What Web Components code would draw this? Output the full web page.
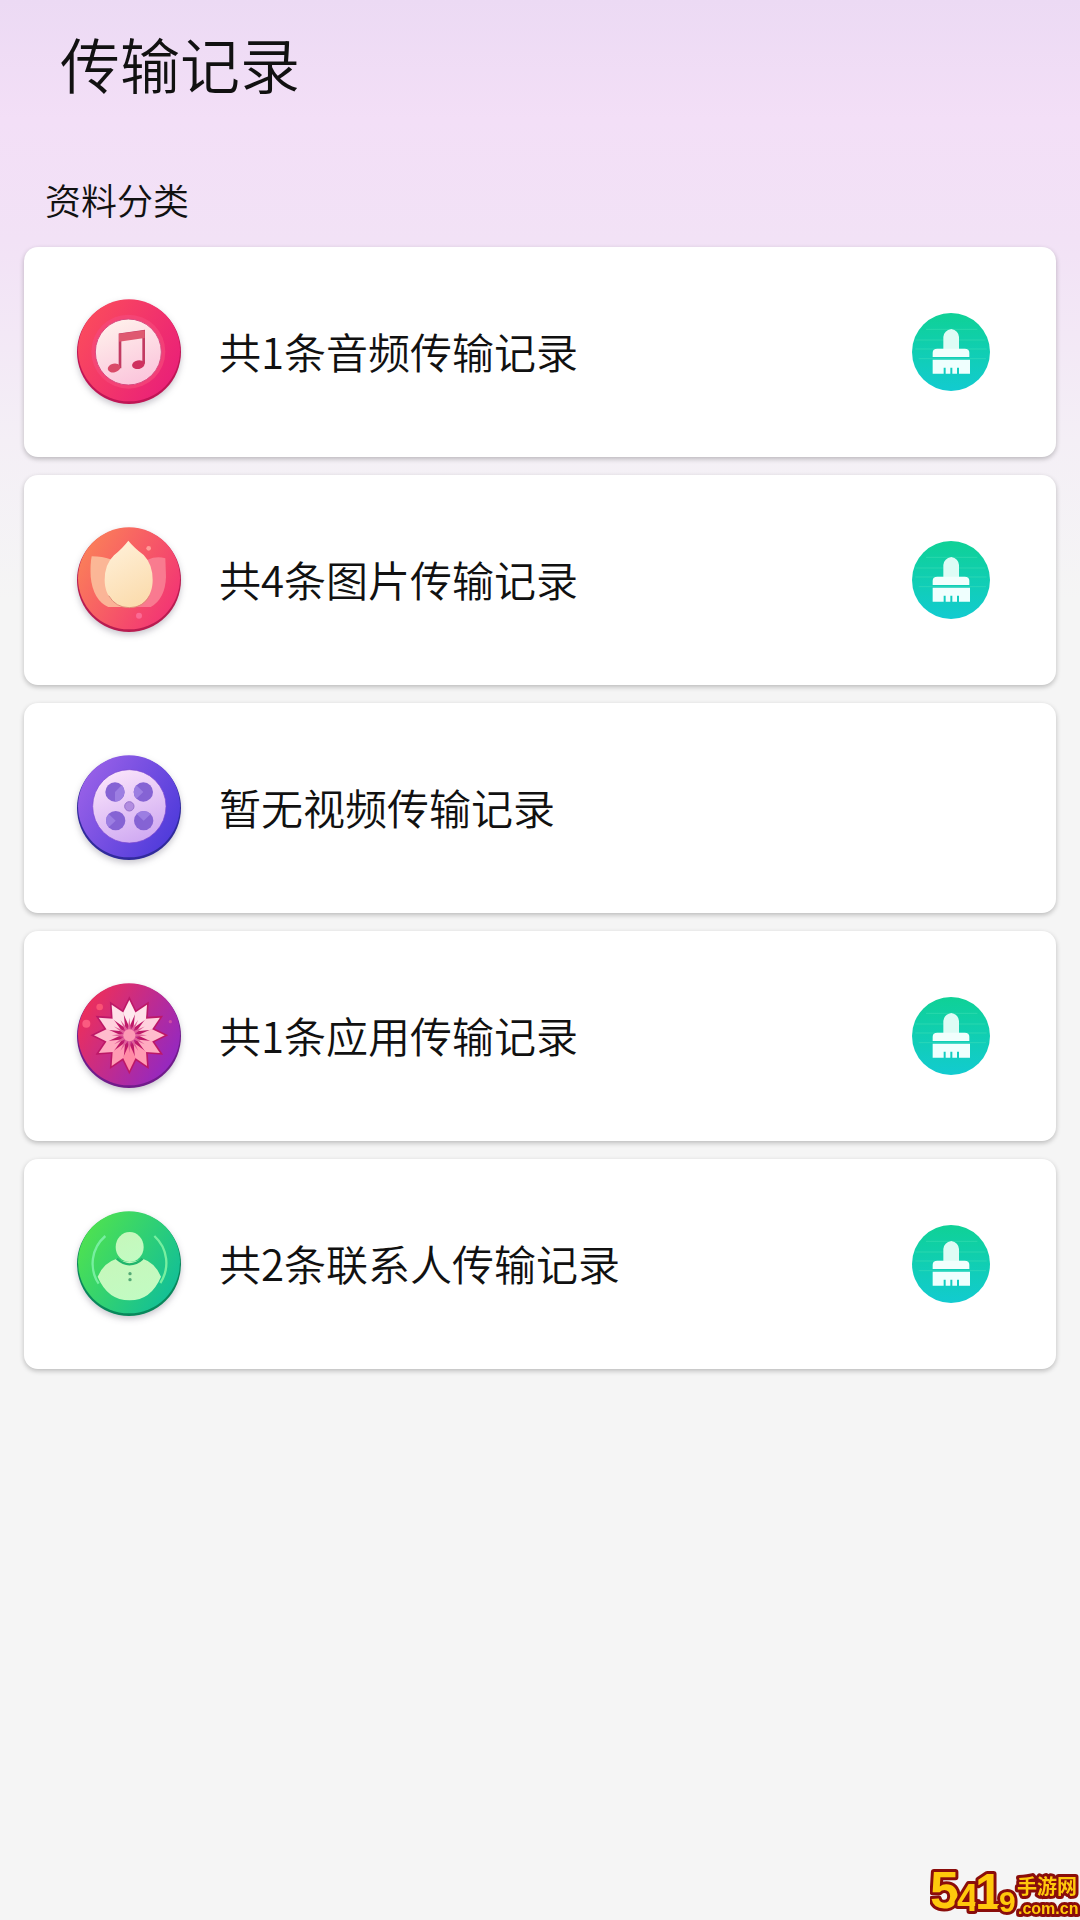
<!DOCTYPE html>
<html lang="zh-CN">
<head>
<meta charset="utf-8">
<meta name="viewport" content="width=device-width, initial-scale=1">
<title>传输记录</title>
<style>
body { margin: 0; font-family: "Noto Sans CJK SC", sans-serif; color: #111; background: #f5f5f5; }
</style>
</head>
<body>
<transfer-page heading="传输记录" section="资料分类">
    <record-card type="audio" clearable>共1条音频传输记录</record-card>
    <record-card type="image" clearable>共4条图片传输记录</record-card>
    <record-card type="video">暂无视频传输记录</record-card>
    <record-card type="app" clearable>共1条应用传输记录</record-card>
    <record-card type="contact" clearable>共2条联系人传输记录</record-card>
</transfer-page>
<site-mark></site-mark>

<script>
const petals = (d, fills) => {
    let out = "";
    for (let i = 0; i < 12; i++) {
        // fills run from the top petal down to the bottom one
        const fill = fills[Math.min(i, 12 - i) % fills.length];
        out += `<path d="${d}" fill="${fill}" transform="rotate(${i * 30} 208 211)"/>`;
    }
    return out;
};

// each drawing is 312 units wide; box is the top left of its viewBox
const ICONS = {
    audio: {
        box: "51 57", from: "#fb4c5c", to: "#e91e79", edge: "#c01555",
        art: `<circle cx="205" cy="212" r="111" fill="#f5487b" opacity=".7"/>
            <circle cx="205" cy="213" r="99" fill="url(#pale)" stroke="#d84b80" stroke-width="3"/>
            <path d="M180 262V161L251 151V248" fill="none" stroke="#c23a62" stroke-width="8"/>
            <path d="M177 158L254 148V171L177 182Z" fill="#df5870"/>
            <ellipse cx="162" cy="261" rx="19" ry="13" fill="#d94a68" transform="rotate(-12 162 261)"/>
            <ellipse cx="235" cy="251" rx="19" ry="13" fill="#cf315f" transform="rotate(-12 235 251)"/>`,
        pale: ["#fff2ec", "#fbc5dc"]
    },
    image: {
        box: "51 54", from: "#fb8258", to: "#f23175", edge: "#b91c50",
        art: `<path d="M95 139Q128 139 151 148L208 210V291H145Q99 270 92 200Q90 165 95 139Z" fill="#fcc3a0" opacity=".85"/>
            <path d="M316 145Q290 137 263 149L208 210V291H272Q316 266 318 200Z" fill="#fa8798" opacity=".8"/>
            <path d="M205 92Q221 112 251 135Q278 163 278 210C278 260 248 293 208 293C163 293 134 257 134 210Q134 163 162 136Q190 112 205 92Z" fill="url(#pale)"/>
            <path d="M146 257Q167 293 208 293Q250 293 269 257" fill="none" stroke="#e18a77" stroke-width="3"/>
            <circle cx="266" cy="115" r="7" fill="#ff9c97"/><circle cx="237" cy="317" r="9" fill="#fb6a94"/>`,
        pale: ["#fff0d8", "#fbdcae"]
    },
    video: {
        box: "51 48", from: "#9b62e8", to: "#4b39da", edge: "#302a9c",
        art: `<circle cx="208" cy="199" r="110" fill="url(#pale)" stroke="#7c49d0" stroke-width="2"/>
            <g fill="#8563d4"><circle cx="165" cy="156" r="29"/><circle cx="250" cy="156" r="29"/><circle cx="167" cy="242" r="29"/><circle cx="251" cy="242" r="29"/></g>
            <g fill="#9c7ee2"><path d="M165 156L185 136A29 29 0 0 1 165 185Z"/><path d="M250 156L229 136A29 29 0 0 0 229 176Z"/><path d="M167 242L146 222A29 29 0 0 0 146 262Z"/><path d="M251 242L230 222A29 29 0 0 1 272 222Z"/></g>
            <circle cx="208" cy="199" r="14" fill="#b28ce0" stroke="#9772cc" stroke-width="3"/>`,
        pale: ["#fce6fb", "#d0aaf2"]
    },
    app: {
        box: "51 57", from: "#f22f55", to: "#8e28c8", edge: "#711b8b",
        art: petals("M208 94L232 143L208 200L184 143Z", ["#bd1867"]) +
            petals("M208 105L227 144L208 186L189 144Z", ["#ffe9ee", "#ffe0e8", "#ffd2de", "#ffbccd", "#ffabc0", "#ff9bb3", "#ff8ba6"]) +
            petals("M208 158L215 211H201Z", ["#e0609a"]) +
            `<circle cx="208" cy="211" r="18" fill="#fc9ab5"/>
            <circle cx="119" cy="126" r="10" fill="#fa5274"/><circle cx="79" cy="176" r="12" fill="#fb5b80"/><circle cx="331" cy="170" r="5" fill="#cd4ba6"/>`,
        pale: ["#ffe4ea", "#ff8eae"]
    },
    contact: {
        box: "51 51", from: "#51e34d", to: "#0fbd9b", edge: "#08885b",
        art: `<path d="M136 123A109 109 0 0 0 116 266M283 123A109 109 0 0 1 301 264" fill="none" stroke="#77efa0" stroke-width="7"/>
            <path d="M113 245Q130 203 170 191Q208 211 248 191Q286 203 303 245Q273 316 209 316Q143 316 113 245Z" fill="url(#pale)"/>
            <path d="M170 191Q190 208 208 208Q230 208 248 191" fill="none" stroke="#20b56c" stroke-width="7"/>
            <ellipse cx="209" cy="156" rx="42" ry="45" fill="url(#pale)"/>
            <circle cx="210" cy="236" r="5" fill="#54a976"/><circle cx="210" cy="254" r="5" fill="#54a976"/>`,
        pale: ["#c6f7bb", "#c2fbc2"]
    }
};

class RecordIcon extends HTMLElement {

    constructor() {
        super();
        this.attachShadow({ mode: "open" });
    }

    connectedCallback() {
        const icon = ICONS[this.getAttribute("type")];
        const [x, y] = icon.box.split(" ").map(Number);
        this.shadowRoot.innerHTML = `<style>
            :host { display: block; flex: none; width: 104px; height: 104px; }
            svg { display: block; width: 100%; height: 100%; overflow: visible; filter: drop-shadow(0 3px 3px rgba(40, 30, 60, .25)); }
        </style>
        <svg viewBox="${x} ${y} 312 312" aria-hidden="true">
            <defs>
                <linearGradient id="disc" x1="0" y1=".2" x2="1" y2=".8"><stop stop-color="${icon.from}"/><stop offset="1" stop-color="${icon.to}"/></linearGradient>
                <linearGradient id="pale" x1=".2" y1="0" x2=".6" y2="1"><stop stop-color="${icon.pale[0]}"/><stop offset="1" stop-color="${icon.pale[1]}"/></linearGradient>
            </defs>
            <circle cx="${x + 156}" cy="${y + 156}" r="156" fill="${icon.edge}"/>
            <circle cx="${x + 156}" cy="${y + 151}" r="153" fill="url(#disc)"/>
            ${icon.art}
        </svg>`;
    }
}

class ClearButton extends HTMLElement {

    constructor() {
        super();
        this.attachShadow({ mode: "open" });
        this.shadowRoot.innerHTML = `<style>
            :host { display: block; flex: none; }
            button { display: block; width: 78px; height: 78px; padding: 0; border: 0; border-radius: 50%; background: linear-gradient(#0fd196, #12cbd0); cursor: pointer; }
            svg { display: block; width: 100%; height: 100%; }
        </style>
        <button type="button" aria-label="清除记录">
            <svg viewBox="0 0 234 234" aria-hidden="true">
                <path d="M42 49H196M10 81H220M10 108H224M20 137H222" stroke="#5ce9bd" stroke-width="2" opacity=".5"/>
                <path d="M94 112V72Q96 52 118 48Q139 52 141 72V112Z" fill="#ddfcf5"/>
                <path d="M62 132V119Q62 107 76 107H158Q172 107 172 119V132Z" fill="#f1fffd"/>
                <path d="M62 140H174V182H141V164H135V182H121V164H115V182H101V164H95V182H62Z" fill="#effffe"/>
            </svg>
        </button>`;
    }
}

class RecordCard extends HTMLElement {

    constructor() {
        super();
        this.attachShadow({ mode: "open" });
    }

    connectedCallback() {
        this.shadowRoot.innerHTML = `<style>
            :host { display: flex; align-items: center; gap: 38px; box-sizing: border-box; min-height: 210px; padding: 24px 66px 24px 53px; border-radius: 14px; background: #fff; box-shadow: 0 2px 5px rgba(0, 0, 0, .24); }
            .label { flex: 1; padding-bottom: 2px; font-size: 42px; line-height: 60px; }
        </style>
        <record-icon type="${this.getAttribute("type")}"></record-icon>
        <span class="label"><slot></slot></span>
        ${this.hasAttribute("clearable") ? "<clear-button></clear-button>" : ""}`;
    }
}

class TransferPage extends HTMLElement {

    constructor() {
        super();
        this.attachShadow({ mode: "open" });
    }

    connectedCallback() {
        this.shadowRoot.innerHTML = `<style>
            :host { display: block; box-sizing: border-box; min-height: 100vh; font-weight: 350; background: linear-gradient(#ecdaf4, #f3dff7 120px, #f2e2f6 240px, #f4eff6 440px, #f5f5f5 600px); }
            h1 { margin: 0; padding: 18px 60px 22px; font-size: 60px; line-height: 90px; font-weight: inherit; }
            h2 { margin: 0; padding: 45px 45px 24px; font-size: 36px; line-height: 48px; font-weight: inherit; }
            .list { display: flex; flex-direction: column; gap: 18px; padding: 0 24px 24px; }
        </style>
        <h1>${this.getAttribute("heading")}</h1>
        <h2>${this.getAttribute("section")}</h2>
        <div class="list"><slot></slot></div>`;
    }
}

class SiteMark extends HTMLElement {

    constructor() {
        super();
        this.attachShadow({ mode: "open" });
        this.shadowRoot.innerHTML = `<style>
            :host { position: fixed; right: 0; bottom: 0; width: 150px; height: 64px; }
            svg { display: block; width: 100%; height: 100%; }
            text { font-family: "Liberation Sans", "Noto Sans CJK SC", sans-serif; font-weight: 700; fill: #ffc90c; stroke: #8a0d0b; stroke-width: 6px; stroke-linejoin: round; paint-order: stroke; }
        </style>
        <svg viewBox="0 0 150 64">
            <text x="0" y="52" font-size="52">5</text>
            <text x="27" y="55" font-size="38">4</text>
            <text x="45" y="53" font-size="50">1</text>
            <text x="69" y="56" font-size="30">9</text>
            <text x="87" y="38" font-size="20">手游网</text>
            <text x="88" y="58" font-size="16">.com.cn</text>
        </svg>`;
    }
}

customElements.define("record-icon", RecordIcon);
customElements.define("clear-button", ClearButton);
customElements.define("record-card", RecordCard);
customElements.define("transfer-page", TransferPage);
customElements.define("site-mark", SiteMark);
</script>
</body>
</html>
